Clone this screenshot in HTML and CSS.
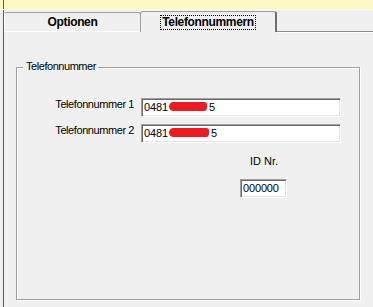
FILE: index.html
```html
<!DOCTYPE html>
<html lang="de">
<head>
    <meta charset="UTF-8">
    <title>Telefonnummern</title>
    <link rel="stylesheet" href="styles.css">
</head>
<body>
    <div class="infobar"></div>
    <div class="window">
        <div class="tabs">
            <div class="tab">Optionen</div>
            <div class="tab tab-active"><span class="focus">Telefonnummern</span></div>
            <div class="tab-rest"></div>
        </div>
        <div class="panel">
            <div class="group">
                <div class="legend">Telefonnummer</div>
                <div class="rows">
                    <label class="label">Telefonnummer 1</label>
                    <div class="field">0481<span class="redact"></span>5</div>
                    <label class="label">Telefonnummer 2</label>
                    <div class="field">0481<span class="redact wide"></span>5</div>
                    <div class="id-box">
                        <div class="id-label">ID Nr.</div>
                        <div class="field field-id">000000</div>
                    </div>
                </div>
            </div>
        </div>
    </div>
</body>
</html>
```
FILE: styles.css
```css
body {
    margin: 0;
    background-color: #f0f0f0;
    font-family: 'Liberation Sans', Arial, sans-serif;
    font-size: 11px;
    line-height: 13px;
    color: #000;
    overflow: hidden;
}

.infobar {
    height: 9px;
    border-bottom: 1px solid #fdfde4;
    background: linear-gradient(to right, #fbf9c6 3px, #5a5a5a 3px, #5a5a5a 4px, #fbf9c6 4px);
}

.window {
    margin-left: 3px;
    border-left: 1px solid #5a5a5a;
    height: 297px;
}

.tabs {
    display: flex;
    align-items: flex-end;
    height: 22px;
}

.tab {
    box-sizing: border-box;
    width: 137px;
    height: 20px;
    padding-top: 3px;
    border: 1px solid #a0a0a0;
    border-left-color: #fff;
    border-bottom-color: #fff;
    border-radius: 3px 3px 0 0;
    text-align: center;
    font-weight: bold;
    font-size: 12px;
    letter-spacing: -0.35px;
}

.tab-active {
    height: 21px;
    margin-left: -1px;
    padding-top: 3px;
    border-left-color: #a0a0a0;
    border-right: 2px solid #6e6e6e;
    border-bottom: none;
    background-color: #f0f0f0;
}

.focus {
    display: inline-block;
    padding: 0 1px;
    border: 1px dotted #000;
}

.tab-rest {
    flex: 1;
    height: 1px;
    background-color: #8a8a8a;
    box-shadow: 0 1px 0 #fff;
}

.panel {
    padding: 35px 13px 0 12px;
}

.group {
    box-sizing: border-box;
    width: 344px;
    height: 233px;
    border: 1px solid #a0a0a0;
    box-shadow: 1px 1px 0 #fff, inset 1px 1px 0 #fff;
}

.legend {
    display: table;
    margin: -8px 0 0 6px;
    padding: 0 2px 0 3px;
    background-color: #f0f0f0;
    letter-spacing: -0.45px;
}

.rows {
    display: grid;
    grid-template-columns: 117px 200px;
    column-gap: 7px;
    row-gap: 7px;
    align-items: start;
    margin-top: 25px;
}

.label {
    text-align: right;
    letter-spacing: -0.42px;
}

.field {
    height: 13px;
    padding: 2px 2px;
    border: 1px solid;
    border-color: #a0a0a0 #fff #fff #a0a0a0;
    box-shadow: inset 1px 1px 0 #6a6a6a, inset -1px -1px 0 #e3e3e3;
    background-color: #fff;
    white-space: nowrap;
    letter-spacing: -0.15px;
}

.redact {
    display: inline-block;
    width: 38px;
    height: 9px;
    margin: 0 2px 0 1px;
    border-radius: 5px 3px 4px 5px;
    background-color: #ed1c24;
}

.redact.wide {
    width: 40px;
}

.id-box {
    grid-column: 2;
    width: 47px;
    margin: 5px 0 0 99px;
    text-align: center;
}

.id-label {
    margin-bottom: 11px;
    margin-left: -1px;
    margin-right: -2px;
}

.field-id {
    text-align: left;
}
```
